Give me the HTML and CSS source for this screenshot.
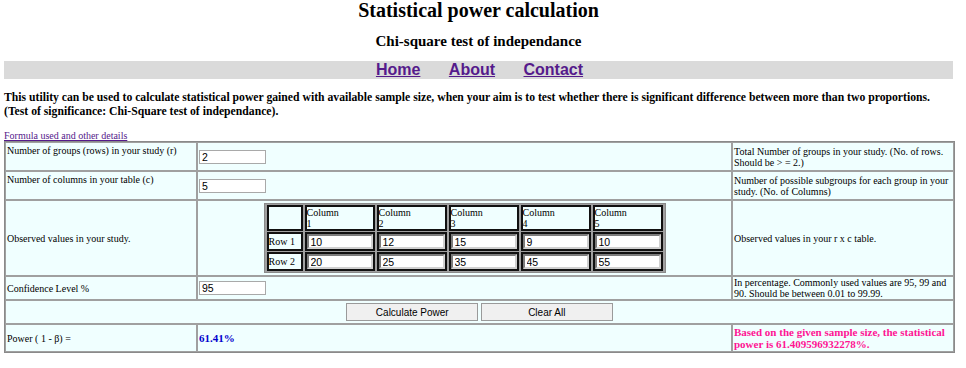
FILE: index.html
```html
<!DOCTYPE html>
<html lang="en">
<head>
    <meta charset="UTF-8">
    <title>Statistical power calculation</title>
    <link rel="stylesheet" href="styles.css">
</head>
<body>
    <div class="page">
        <h1 class="title">Statistical power calculation</h1>
        <h2 class="subtitle">Chi-square test of independance</h2>
        <div class="nav">
            <a href="#">Home</a>
            <a href="#">About</a>
            <a href="#">Contact</a>
        </div>
        <p class="intro">This utility can be used to calculate statistical power gained with available sample size, when your aim is to test whether there is significant difference between more than two proportions. (Test of significance: Chi-Square test of independance).</p>
        <a class="formula" href="#">Formula used and other details</a>
        <table class="calc">
            <colgroup>
                <col class="col-label">
                <col class="col-input">
                <col class="col-desc">
            </colgroup>
            <tr class="row-rows">
                <td class="top">Number of groups (rows) in your study (r)</td>
                <td><input type="text" class="field" value="2"></td>
                <td>Total Number of groups in your study. (No. of rows. Should be &gt; = 2.)</td>
            </tr>
            <tr class="row-cols">
                <td class="top">Number of columns in your table (c)</td>
                <td><input type="text" class="field" value="5"></td>
                <td>Number of possible subgroups for each group in your study. (No. of Columns)</td>
            </tr>
            <tr class="row-obs">
                <td>Observed values in your study.</td>
                <td class="center">
                    <table class="obs">
                        <tr class="obs-head">
                            <td class="corner"></td>
                            <td class="head">Column<br>1</td>
                            <td class="head">Column<br>2</td>
                            <td class="head">Column<br>3</td>
                            <td class="head">Column<br>4</td>
                            <td class="head">Column<br>5</td>
                        </tr>
                        <tr>
                            <td class="rowname">Row 1</td>
                            <td><input type="text" class="cell" value="10"></td>
                            <td><input type="text" class="cell" value="12"></td>
                            <td><input type="text" class="cell" value="15"></td>
                            <td><input type="text" class="cell" value="9"></td>
                            <td><input type="text" class="cell" value="10"></td>
                        </tr>
                        <tr>
                            <td class="rowname">Row 2</td>
                            <td><input type="text" class="cell" value="20"></td>
                            <td><input type="text" class="cell" value="25"></td>
                            <td><input type="text" class="cell" value="35"></td>
                            <td><input type="text" class="cell" value="45"></td>
                            <td><input type="text" class="cell" value="55"></td>
                        </tr>
                    </table>
                </td>
                <td>Observed values in your r x c table.</td>
            </tr>
            <tr class="row-conf">
                <td>Confidence Level %</td>
                <td><input type="text" class="field" value="95"></td>
                <td>In percentage. Commonly used values are 95, 99 and 90. Should be between 0.01 to 99.99.</td>
            </tr>
            <tr class="row-actions">
                <td colspan="3" class="actions">
                    <button type="button" class="btn">Calculate Power</button>
                    <button type="button" class="btn">Clear All</button>
                </td>
            </tr>
            <tr class="row-result">
                <td>Power ( 1 - &beta;) =</td>
                <td class="result">61.41%</td>
                <td class="verdict">Based on the given sample size, the statistical power is 61.409596932278%.</td>
            </tr>
        </table>
    </div>
</body>
</html>
```

FILE: styles.css
```css
body {
    margin: 0;
    background: #fff;
    font-family: "Liberation Serif", "Times New Roman", serif;
    color: #000;
}

.page {
    width: 949px;
    margin-left: 4px;
}

.title {
    margin: 0;
    font-size: 20px;
    line-height: 20px;
    text-align: center;
}

.subtitle {
    margin: 13px 0 0;
    font-size: 15px;
    line-height: 17px;
    text-align: center;
}

.nav {
    margin-top: 11px;
    height: 18px;
    line-height: 18px;
    background-color: #dadada;
    text-align: center;
    font-family: "Liberation Sans", Arial, sans-serif;
}

.nav a {
    margin: 0 12px;
    font-size: 16px;
    font-weight: bold;
    color: #551a8b;
}

.nav a:first-child {
    margin-left: 14px;
}

.intro {
    margin: 12px 0 0;
    font-size: 11.7px;
    font-weight: bold;
    line-height: 14px;
}

.formula {
    display: block;
    margin-top: 11px;
    font-size: 10px;
    line-height: 11px;
    color: #551a8b;
}

/* main form table */
.calc {
    width: 949px;
    table-layout: fixed;
    border-collapse: separate;
    border-spacing: 0;
    border: 1px solid #8a8a8a;
    font-size: 10px;
}

.col-label { width: 192px; }
.col-input { width: 535px; }
.col-desc { width: 222px; }

.calc > tbody > tr > td {
    border: 1px solid #a0a0a0;
    padding: 0 1px;
    background-color: #f0ffff;
    vertical-align: middle;
}

.calc > tbody > tr > td.top {
    vertical-align: top;
    padding-top: 2px;
}

.row-rows, .row-cols { height: 29px; }
.row-obs { height: 76px; }
.row-conf { height: 24px; }
.row-actions { height: 24px; }
.row-result { height: 28px; }

.field {
    width: 67px;
    height: 14px;
    margin: 0;
    box-sizing: border-box;
    padding: 0 2px;
    border: 1px solid #a9a9a9;
    font-family: "Liberation Sans", Arial, sans-serif;
    font-size: 10.5px;
}

.center {
    text-align: center;
}

/* observed values grid */
.obs {
    margin: 0 auto;
    border: 1px solid #8a8a8a;
    border-spacing: 2px 1px;
    background-color: #a0a0a0;
    text-align: left;
}

.obs td {
    border: 2px solid #111;
    padding: 0;
    background-color: #f0ffff;
    font-size: 10px;
    line-height: 11px;
    vertical-align: top;
}

.obs .corner {
    width: 32px;
}

.obs .head {
    width: 66px;
}

.obs-head { height: 26px; }

.obs .rowname {
    vertical-align: middle;
    line-height: 13px;
}

.cell {
    display: block;
    width: 66px;
    height: 15px;
    margin: 0;
    box-sizing: border-box;
    padding: 0 2px;
    border: 2px inset #d0d0d0;
    font-family: "Liberation Sans", Arial, sans-serif;
    font-size: 10.5px;
}

.actions {
    text-align: center;
}

.btn {
    width: 132px;
    height: 18px;
    margin: 0;
    padding: 0;
    border: 1px solid #9a9a9a;
    background-color: #f0f0f0;
    font-family: "Liberation Sans", Arial, sans-serif;
    font-size: 10px;
    color: #000;
}

.result {
    font-size: 11px;
    font-weight: bold;
    color: #0000cd;
}

.verdict {
    font-size: 11px;
    font-weight: bold;
    color: #ff1493;
}
```
